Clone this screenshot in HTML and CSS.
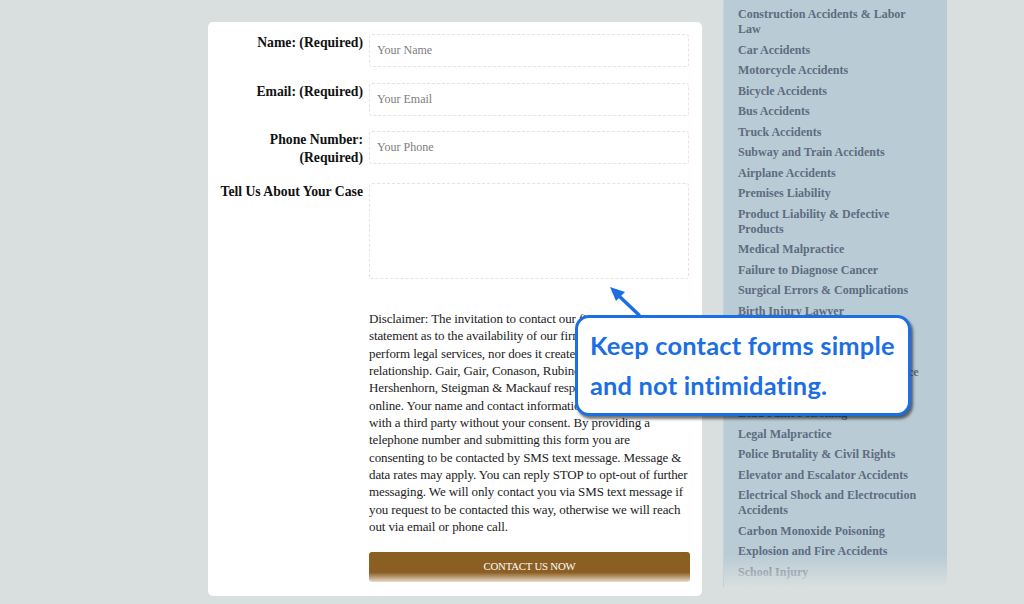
FILE: index.html
```html
<!DOCTYPE html>
<html lang="en">

<head>
  <meta charset="UTF-8">
  <meta name="viewport" content="width=device-width, initial-scale=1.0">
  <title>Contact Us</title>
  <link rel="stylesheet" href="styles.css">
</head>

<body>
  <div class="page">

    <div class="card">
      <form class="contact-form">
        <div class="form-row">
          <label class="form-label" for="name">Name: (Required)</label>
          <input class="form-field" type="text" id="name" placeholder="Your Name">
        </div>

        <div class="form-row">
          <label class="form-label" for="email">Email: (Required)</label>
          <input class="form-field" type="email" id="email" placeholder="Your Email">
        </div>

        <div class="form-row">
          <label class="form-label" for="phone">Phone Number:<br>(Required)</label>
          <input class="form-field" type="tel" id="phone" placeholder="Your Phone">
        </div>

        <div class="form-row">
          <label class="form-label" for="case">Tell Us About Your Case</label>
          <textarea class="form-field form-textarea" id="case"></textarea>
        </div>

        <div class="form-row">
          <span class="form-label"></span>
          <div class="form-body">
            <p class="disclaimer">Disclaimer: The invitation to contact our firm is not a<br>
              statement as to the availability of our firm to<br>
              perform legal services, nor does it create an attorney-client<br>
              relationship. Gair, Gair, Conason, Rubinowitz, Bloom,<br>
              Hershenhorn, Steigman &amp; Mackauf respects your privacy<br>
              online. Your name and contact information will not be shared<br>
              with a third party without your consent. By providing a<br>
              telephone number and submitting this form you are<br>
              consenting to be contacted by SMS text message. Message &amp;<br>
              data rates may apply. You can reply STOP to opt-out of further<br>
              messaging. We will only contact you via SMS text message if<br>
              you request to be contacted this way, otherwise we will reach<br>
              out via email or phone call.</p>
            <button class="submit-btn" type="button">CONTACT US NOW</button>
          </div>
        </div>
      </form>
    </div>

    <aside class="sidebar">
      <ul class="practice-list">
        <li>Construction Accidents &amp; Labor Law</li>
        <li>Car Accidents</li>
        <li>Motorcycle Accidents</li>
        <li>Bicycle Accidents</li>
        <li>Bus Accidents</li>
        <li>Truck Accidents</li>
        <li>Subway and Train Accidents</li>
        <li>Airplane Accidents</li>
        <li>Premises Liability</li>
        <li>Product Liability &amp; Defective Products</li>
        <li>Medical Malpractice</li>
        <li>Failure to Diagnose Cancer</li>
        <li>Surgical Errors &amp; Complications</li>
        <li>Birth Injury Lawyer</li>
        <li>Wrongful Death</li>
        <li>Brain Injury</li>
        <li>Nursing Home Abuse &amp; Negligence</li>
        <li>Spinal Cord Injury</li>
        <li>Lead Paint Poisoning</li>
        <li>Legal Malpractice</li>
        <li>Police Brutality &amp; Civil Rights</li>
        <li>Elevator and Escalator Accidents</li>
        <li>Electrical Shock and Electrocution Accidents</li>
        <li>Carbon Monoxide Poisoning</li>
        <li>Explosion and Fire Accidents</li>
        <li>School Injury</li>
        <li>Slip and Fall</li>
      </ul>
    </aside>

  </div>

  <!-- annotation over the screenshot -->
  <div class="callout">
    <svg class="callout-arrow" width="40" height="36" viewBox="0 0 40 36">
      <line x1="33" y1="33" x2="12" y2="13" stroke="#1c6fe3" stroke-width="3.5" stroke-linecap="round"/>
      <polygon points="4,5 19,10 10,19" fill="#1c6fe3"/>
    </svg>
    <p class="callout-text">Keep contact forms simple<br>and not intimidating.</p>
  </div>
</body>

</html>
```

FILE: styles.css
```css
body {
  margin: 0;
  background-color: #d9dfdf;
  font-family: Georgia, "Liberation Serif", serif;
  overflow: hidden;
}

.page {
  display: flex;
  align-items: flex-start;
  gap: 21px;
  padding-left: 208px;
  height: 604px;
}

.card {
  width: 494px;
  margin-top: 22px;
  background-color: #fff;
  border-radius: 5px;
  padding: 12px 13px 14px 12px;
  box-sizing: border-box;
}

.form-row {
  display: flex;
  gap: 6px;
  margin-bottom: 15.5px;
}

.form-row:last-child {
  margin-bottom: 0;
}

.form-label {
  width: 143px;
  flex-shrink: 0;
  text-align: right;
  font-family: "Liberation Serif", serif;
  font-weight: bold;
  font-size: 13.7px;
  line-height: 18px;
  color: #111;
}

.form-field {
  width: 320px;
  height: 33px;
  box-sizing: border-box;
  padding: 0 7px;
  border: 1px dashed #e4e4e4;
  border-radius: 3px;
  font-family: "Liberation Serif", serif;
  font-size: 12px;
  color: #333;
  outline: none;
}

.form-field::placeholder {
  color: #7d7d7d;
}

.form-textarea {
  height: 96px;
  resize: none;
  padding: 8px 7px;
}

.form-body {
  width: 320px;
  padding-top: 16px;
}

.disclaimer {
  margin: 0 0 16.5px;
  font-family: "Liberation Serif", serif;
  font-size: 13px;
  letter-spacing: -0.12px;
  line-height: 17.33px;
  white-space: nowrap;
  color: #222;
}

.submit-btn {
  display: block;
  width: 321px;
  height: 30px;
  border: none;
  border-radius: 3px;
  background: linear-gradient(to bottom, #8b5e22 0%, #8b5e22 68%, #b4946a 82%, #e6dccd 100%);
  color: #fff;
  font-family: "Liberation Serif", serif;
  font-size: 10.8px;
  letter-spacing: -0.2px;
  padding-bottom: 2px;
  cursor: pointer;
}

.sidebar {
  position: relative;
  width: 224px;
  height: 588px;
  background-color: #b9cbd5;
  border-left: 1px dotted #cdd9df;
  box-sizing: border-box;
  padding: 7px 22px 0 14px;
  overflow: hidden;
}

.sidebar::after {
  content: "";
  position: absolute;
  left: 0;
  right: 0;
  bottom: 0;
  height: 34px;
  background: linear-gradient(to bottom, rgba(217, 223, 223, 0), #d9dfdf);
}

.practice-list {
  list-style: none;
  margin: 0;
  padding: 0;
}

.practice-list li {
  font-family: "Liberation Serif", serif;
  font-weight: bold;
  font-size: 12px;
  line-height: 15px;
  margin-bottom: 5.5px;
  color: #5f6c81;
}

.callout {
  position: absolute;
  left: 575px;
  top: 315px;
  width: 336px;
  height: 101px;
  box-sizing: border-box;
  background-color: #fff;
  border: 3px solid #1c6fe3;
  border-radius: 14px;
  box-shadow: 2px 3px 3px rgba(0, 0, 0, 0.55);
  padding: 7px 0 0 12px;
}

.callout-arrow {
  position: absolute;
  left: 28px;
  top: -36px;
}

.callout-text {
  margin: 0;
  font-family: Lato, "Open Sans", sans-serif;
  font-weight: bold;
  font-size: 25.4px;
  line-height: 40px;
  color: #1c6fe3;
  letter-spacing: 0.2px;
}
```
